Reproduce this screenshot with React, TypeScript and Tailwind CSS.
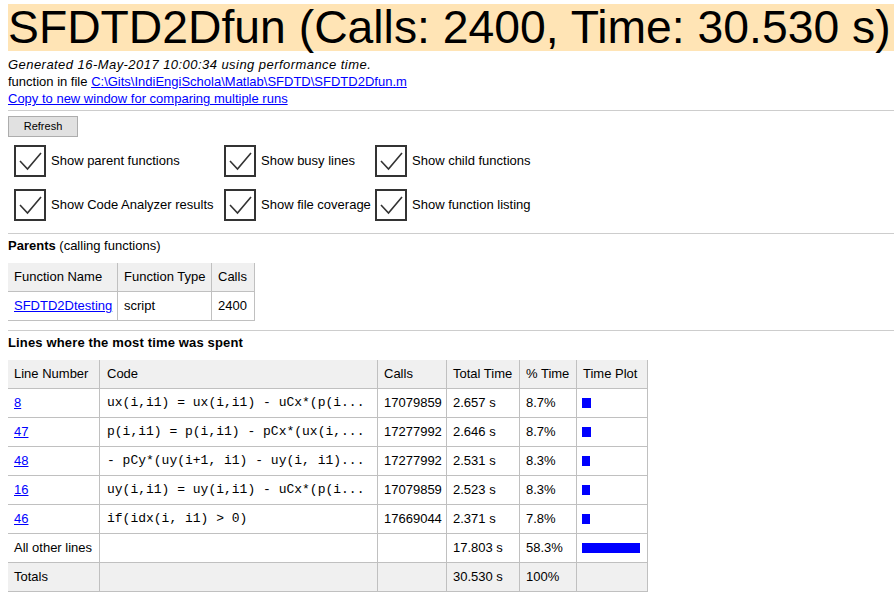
import { ReactNode } from "react";

const options = [
  ["Show parent functions", "Show busy lines", "Show child functions"],
  ["Show Code Analyzer results", "Show file coverage", "Show function listing"],
];

const lines = [
  { line: "8", code: "ux(i,i1) = ux(i,i1) - uCx*(p(i...", calls: "17079859", time: "2.657 s", pct: 8.7 },
  { line: "47", code: "p(i,i1) = p(i,i1) - pCx*(ux(i,...", calls: "17277992", time: "2.646 s", pct: 8.7 },
  { line: "48", code: "- pCy*(uy(i+1, i1) - uy(i, i1)...", calls: "17277992", time: "2.531 s", pct: 8.3 },
  { line: "16", code: "uy(i,i1) = uy(i,i1) - uCx*(p(i...", calls: "17079859", time: "2.523 s", pct: 8.3 },
  { line: "46", code: "if(idx(i, i1) > 0)", calls: "17669044", time: "2.371 s", pct: 7.8 },
];

function CheckBox() {
  return (
    <svg width="32" height="32" viewBox="0 0 32 32" className="shrink-0">
      <rect x="1" y="1" width="30" height="30" fill="white" stroke="#333" strokeWidth="2" />
      <polyline points="6,16 13.5,24 27,8" fill="none" stroke="#333" strokeWidth="1.6" />
    </svg>
  );
}

function Th({ children, className = "" }: { children?: ReactNode; className?: string }) {
  return (
    <th className={"h-[29px] border-r border-b border-[#c0c0c0] bg-[#f0f0f0] px-[6px] text-left font-normal align-middle whitespace-nowrap " + className}>
      {children}
    </th>
  );
}

function Td({ children, className = "" }: { children?: ReactNode; className?: string }) {
  return (
    <td className={"h-[29px] border-r border-b border-[#c0c0c0] px-[6px] align-middle whitespace-nowrap " + className}>
      {children}
    </td>
  );
}

function Bar({ pct }: { pct: number }) {
  return <div className="h-[10px] bg-[#0000ff]" style={{ width: Math.round(pct) }} />;
}

export default function App() {
  return (
    <div className="min-h-screen overflow-hidden bg-white pt-1 pl-2 font-['Liberation_Sans',Arial,sans-serif] text-[13px] text-black">
      <h1 className="whitespace-nowrap bg-[#ffe4b5] text-[46.3px] leading-[47px] font-normal">
        SFDTD2Dfun (Calls: 2400, Time: 30.530 s)
      </h1>

      <div className="mt-[5px] leading-[17px]">
        <p className="italic tracking-[0.45px]">Generated 16-May-2017 10:00:34 using performance time.</p>
        <p>
          function in file{" "}
          <a href="#" className="text-[#0000ff] underline">
            C:\Gits\IndiEngiSchola\Matlab\SFDTD\SFDTD2Dfun.m
          </a>
        </p>
        <p>
          <a href="#" className="text-[#0000ff] underline">
            Copy to new window for comparing multiple runs
          </a>
        </p>
      </div>

      <hr className="mt-[3px] border-0 border-t border-[#cdcdcd]" />

      <button className="mt-[5px] flex h-[21px] w-[70px] items-center justify-center border border-[#adadad] bg-[#e1e1e1] text-[11px]">
        Refresh
      </button>

      <div className="ml-[6px] mt-[8px] grid grid-cols-[210px_151px_auto] gap-y-[12px]">
        {options.flat().map((label) => (
          <div key={label} className="flex items-center gap-[5px]">
            <CheckBox />
            <span>{label}</span>
          </div>
        ))}
      </div>

      <hr className="mt-[12px] border-0 border-t border-[#cdcdcd]" />

      <p className="mt-[4px] leading-[16px]">
        <b>Parents</b> (calling functions)
      </p>

      <table className="mt-[9px] table-fixed border-separate border-spacing-0 w-[247px]">
        <colgroup>
          <col className="w-[110px]" />
          <col className="w-[94px]" />
          <col className="w-[43px]" />
        </colgroup>
        <thead>
          <tr>
            <Th>Function Name</Th>
            <Th>Function Type</Th>
            <Th>Calls</Th>
          </tr>
        </thead>
        <tbody>
          <tr>
            <Td>
              <a href="#" className="text-[#0000ff] underline">SFDTD2Dtesting</a>
            </Td>
            <Td>script</Td>
            <Td>2400</Td>
          </tr>
        </tbody>
      </table>

      <hr className="mt-[9px] border-0 border-t border-[#cdcdcd]" />

      <p className="mt-[4px] leading-[16px] font-bold tracking-[0.15px]">Lines where the most time was spent</p>

      <table className="mt-[9px] table-fixed border-separate border-spacing-0 w-[640px]">
        <colgroup>
          <col className="w-[92px]" />
          <col className="w-[278px]" />
          <col className="w-[69px]" />
          <col className="w-[73px]" />
          <col className="w-[57px]" />
          <col className="w-[71px]" />
        </colgroup>
        <thead>
          <tr>
            <Th>Line Number</Th>
            <Th className="pl-[7px]">Code</Th>
            <Th>Calls</Th>
            <Th>Total Time</Th>
            <Th>% Time</Th>
            <Th>Time Plot</Th>
          </tr>
        </thead>
        <tbody>
          {lines.map((r) => (
            <tr key={r.line}>
              <Td>
                <a href="#" className="text-[#0000ff] underline">{r.line}</a>
              </Td>
              <Td className="pl-[7px] font-['Liberation_Mono','Courier_New',monospace] text-[13px]">
                {r.code}
              </Td>
              <Td>{r.calls}</Td>
              <Td>{r.time}</Td>
              <Td>{r.pct}%</Td>
              <Td className="pl-[5px]">
                <Bar pct={r.pct} />
              </Td>
            </tr>
          ))}
          <tr>
            <Td>All other lines</Td>
            <Td />
            <Td />
            <Td>17.803 s</Td>
            <Td>58.3%</Td>
            <Td className="pl-[5px]">
              <Bar pct={58.3} />
            </Td>
          </tr>
          <tr className="bg-[#f0f0f0]">
            <Td>Totals</Td>
            <Td />
            <Td />
            <Td>30.530 s</Td>
            <Td>100%</Td>
            <Td />
          </tr>
        </tbody>
      </table>
    </div>
  );
}
